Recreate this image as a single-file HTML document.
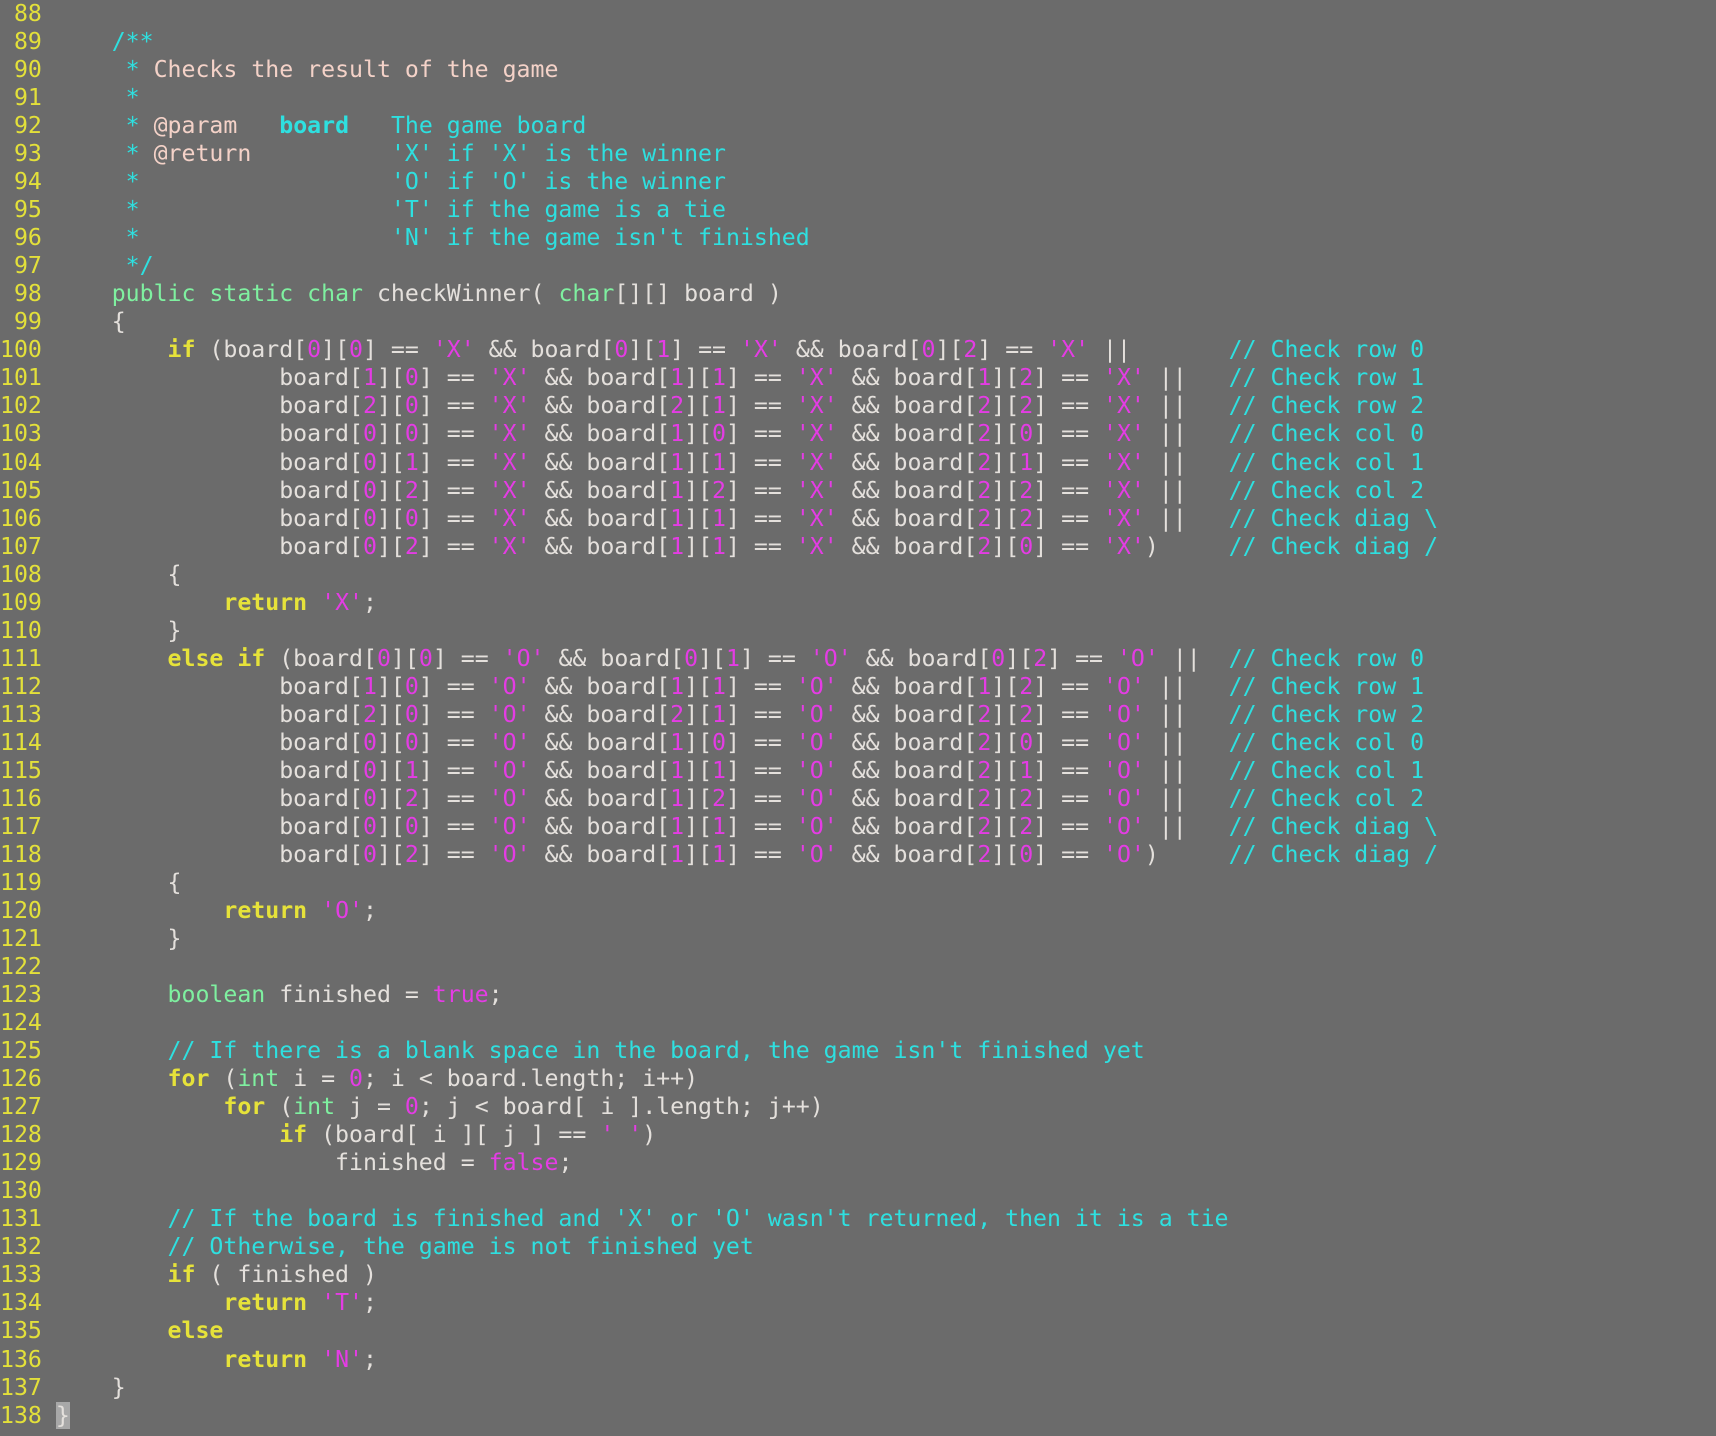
<!DOCTYPE html>
<html><head><meta charset="utf-8"><style>
html,body{margin:0;padding:0;background:#6b6b6b;width:1716px;height:1436px;overflow:hidden}
pre{margin:0;padding:0;font-family:"DejaVu Sans Mono","Liberation Mono",monospace;font-size:23.2px;line-height:28.03px;color:#e4e0dc;white-space:pre}
.n{color:#e3e03a}
.k{color:#e6e23a;font-weight:bold}
.t{color:#7ff0a0}
.m{color:#e43ce4}
.c{color:#2ee0e0}
.d{color:#f4d2c8}
.b{color:#2ee0e0;font-weight:bold}
.cur{background:#a8a8a8;color:#e4e0dc}
</style></head><body><pre><span class="n"> 88</span>
<span class="n"> 89</span>     <span class="c">/**</span>
<span class="n"> 90</span>      <span class="c">*</span> <span class="d">Checks the result of the game</span>
<span class="n"> 91</span>      <span class="c">*</span>
<span class="n"> 92</span>      <span class="c">*</span> <span class="d">@param</span>   <span class="b">board</span>   <span class="c">The game board</span>
<span class="n"> 93</span>      <span class="c">*</span> <span class="d">@return</span>          <span class="c">'X' if 'X' is the winner</span>
<span class="n"> 94</span>      <span class="c">*                  'O' if 'O' is the winner</span>
<span class="n"> 95</span>      <span class="c">*                  'T' if the game is a tie</span>
<span class="n"> 96</span>      <span class="c">*                  'N' if the game isn't finished</span>
<span class="n"> 97</span>      <span class="c">*/</span>
<span class="n"> 98</span>     <span class="t">public static char</span> checkWinner( <span class="t">char</span>[][] board )
<span class="n"> 99</span>     {
<span class="n">100</span>         <span class="k">if</span> (board[<span class="m">0</span>][<span class="m">0</span>] == <span class="m">'X'</span> &amp;&amp; board[<span class="m">0</span>][<span class="m">1</span>] == <span class="m">'X'</span> &amp;&amp; board[<span class="m">0</span>][<span class="m">2</span>] == <span class="m">'X'</span> ||       <span class="c">// Check row 0</span>
<span class="n">101</span>                 board[<span class="m">1</span>][<span class="m">0</span>] == <span class="m">'X'</span> &amp;&amp; board[<span class="m">1</span>][<span class="m">1</span>] == <span class="m">'X'</span> &amp;&amp; board[<span class="m">1</span>][<span class="m">2</span>] == <span class="m">'X'</span> ||   <span class="c">// Check row 1</span>
<span class="n">102</span>                 board[<span class="m">2</span>][<span class="m">0</span>] == <span class="m">'X'</span> &amp;&amp; board[<span class="m">2</span>][<span class="m">1</span>] == <span class="m">'X'</span> &amp;&amp; board[<span class="m">2</span>][<span class="m">2</span>] == <span class="m">'X'</span> ||   <span class="c">// Check row 2</span>
<span class="n">103</span>                 board[<span class="m">0</span>][<span class="m">0</span>] == <span class="m">'X'</span> &amp;&amp; board[<span class="m">1</span>][<span class="m">0</span>] == <span class="m">'X'</span> &amp;&amp; board[<span class="m">2</span>][<span class="m">0</span>] == <span class="m">'X'</span> ||   <span class="c">// Check col 0</span>
<span class="n">104</span>                 board[<span class="m">0</span>][<span class="m">1</span>] == <span class="m">'X'</span> &amp;&amp; board[<span class="m">1</span>][<span class="m">1</span>] == <span class="m">'X'</span> &amp;&amp; board[<span class="m">2</span>][<span class="m">1</span>] == <span class="m">'X'</span> ||   <span class="c">// Check col 1</span>
<span class="n">105</span>                 board[<span class="m">0</span>][<span class="m">2</span>] == <span class="m">'X'</span> &amp;&amp; board[<span class="m">1</span>][<span class="m">2</span>] == <span class="m">'X'</span> &amp;&amp; board[<span class="m">2</span>][<span class="m">2</span>] == <span class="m">'X'</span> ||   <span class="c">// Check col 2</span>
<span class="n">106</span>                 board[<span class="m">0</span>][<span class="m">0</span>] == <span class="m">'X'</span> &amp;&amp; board[<span class="m">1</span>][<span class="m">1</span>] == <span class="m">'X'</span> &amp;&amp; board[<span class="m">2</span>][<span class="m">2</span>] == <span class="m">'X'</span> ||   <span class="c">// Check diag \</span>
<span class="n">107</span>                 board[<span class="m">0</span>][<span class="m">2</span>] == <span class="m">'X'</span> &amp;&amp; board[<span class="m">1</span>][<span class="m">1</span>] == <span class="m">'X'</span> &amp;&amp; board[<span class="m">2</span>][<span class="m">0</span>] == <span class="m">'X'</span>)     <span class="c">// Check diag /</span>
<span class="n">108</span>         {
<span class="n">109</span>             <span class="k">return</span> <span class="m">'X'</span>;
<span class="n">110</span>         }
<span class="n">111</span>         <span class="k">else if</span> (board[<span class="m">0</span>][<span class="m">0</span>] == <span class="m">'O'</span> &amp;&amp; board[<span class="m">0</span>][<span class="m">1</span>] == <span class="m">'O'</span> &amp;&amp; board[<span class="m">0</span>][<span class="m">2</span>] == <span class="m">'O'</span> ||  <span class="c">// Check row 0</span>
<span class="n">112</span>                 board[<span class="m">1</span>][<span class="m">0</span>] == <span class="m">'O'</span> &amp;&amp; board[<span class="m">1</span>][<span class="m">1</span>] == <span class="m">'O'</span> &amp;&amp; board[<span class="m">1</span>][<span class="m">2</span>] == <span class="m">'O'</span> ||   <span class="c">// Check row 1</span>
<span class="n">113</span>                 board[<span class="m">2</span>][<span class="m">0</span>] == <span class="m">'O'</span> &amp;&amp; board[<span class="m">2</span>][<span class="m">1</span>] == <span class="m">'O'</span> &amp;&amp; board[<span class="m">2</span>][<span class="m">2</span>] == <span class="m">'O'</span> ||   <span class="c">// Check row 2</span>
<span class="n">114</span>                 board[<span class="m">0</span>][<span class="m">0</span>] == <span class="m">'O'</span> &amp;&amp; board[<span class="m">1</span>][<span class="m">0</span>] == <span class="m">'O'</span> &amp;&amp; board[<span class="m">2</span>][<span class="m">0</span>] == <span class="m">'O'</span> ||   <span class="c">// Check col 0</span>
<span class="n">115</span>                 board[<span class="m">0</span>][<span class="m">1</span>] == <span class="m">'O'</span> &amp;&amp; board[<span class="m">1</span>][<span class="m">1</span>] == <span class="m">'O'</span> &amp;&amp; board[<span class="m">2</span>][<span class="m">1</span>] == <span class="m">'O'</span> ||   <span class="c">// Check col 1</span>
<span class="n">116</span>                 board[<span class="m">0</span>][<span class="m">2</span>] == <span class="m">'O'</span> &amp;&amp; board[<span class="m">1</span>][<span class="m">2</span>] == <span class="m">'O'</span> &amp;&amp; board[<span class="m">2</span>][<span class="m">2</span>] == <span class="m">'O'</span> ||   <span class="c">// Check col 2</span>
<span class="n">117</span>                 board[<span class="m">0</span>][<span class="m">0</span>] == <span class="m">'O'</span> &amp;&amp; board[<span class="m">1</span>][<span class="m">1</span>] == <span class="m">'O'</span> &amp;&amp; board[<span class="m">2</span>][<span class="m">2</span>] == <span class="m">'O'</span> ||   <span class="c">// Check diag \</span>
<span class="n">118</span>                 board[<span class="m">0</span>][<span class="m">2</span>] == <span class="m">'O'</span> &amp;&amp; board[<span class="m">1</span>][<span class="m">1</span>] == <span class="m">'O'</span> &amp;&amp; board[<span class="m">2</span>][<span class="m">0</span>] == <span class="m">'O'</span>)     <span class="c">// Check diag /</span>
<span class="n">119</span>         {
<span class="n">120</span>             <span class="k">return</span> <span class="m">'O'</span>;
<span class="n">121</span>         }
<span class="n">122</span>
<span class="n">123</span>         <span class="t">boolean</span> finished = <span class="m">true</span>;
<span class="n">124</span>
<span class="n">125</span>         <span class="c">// If there is a blank space in the board, the game isn't finished yet</span>
<span class="n">126</span>         <span class="k">for</span> (<span class="t">int</span> i = <span class="m">0</span>; i &lt; board.length; i++)
<span class="n">127</span>             <span class="k">for</span> (<span class="t">int</span> j = <span class="m">0</span>; j &lt; board[ i ].length; j++)
<span class="n">128</span>                 <span class="k">if</span> (board[ i ][ j ] == <span class="m">' '</span>)
<span class="n">129</span>                     finished = <span class="m">false</span>;
<span class="n">130</span>
<span class="n">131</span>         <span class="c">// If the board is finished and 'X' or 'O' wasn't returned, then it is a tie</span>
<span class="n">132</span>         <span class="c">// Otherwise, the game is not finished yet</span>
<span class="n">133</span>         <span class="k">if</span> ( finished )
<span class="n">134</span>             <span class="k">return</span> <span class="m">'T'</span>;
<span class="n">135</span>         <span class="k">else</span>
<span class="n">136</span>             <span class="k">return</span> <span class="m">'N'</span>;
<span class="n">137</span>     }
<span class="n">138</span> <span class="cur">}</span>
</pre></body></html>
